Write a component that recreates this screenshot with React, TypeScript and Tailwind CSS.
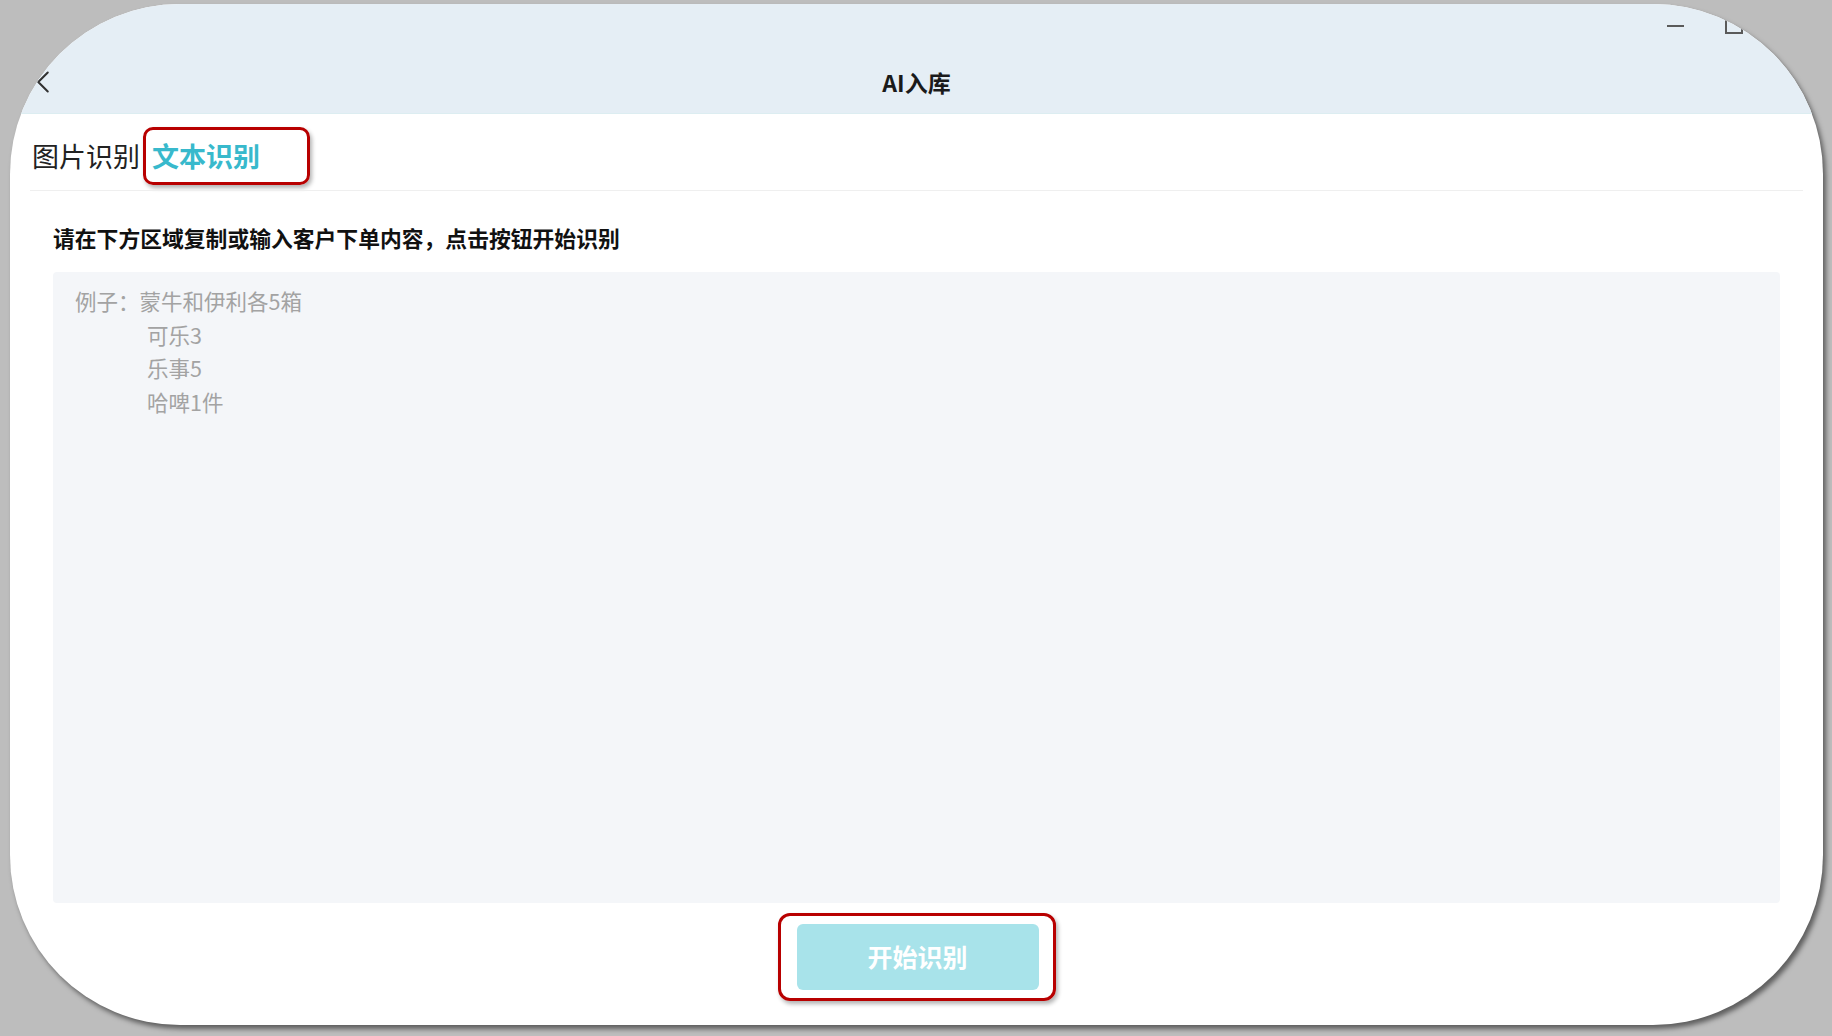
import { ChevronLeft } from "lucide-react";

const cjk = { fontFamily: '"Noto Sans CJK SC", "Noto Sans", sans-serif' };

const sampleLines = ["可乐3", "乐事5", "哈啤1件"];

export default function App() {
  return (
    <div className="w-[1832px] h-[1036px] bg-[#bdbdbd] pt-[4px] pl-[10px]" style={cjk}>
      <div className="relative w-[1813px] h-[1021px] rounded-[170px] overflow-hidden bg-white shadow-[3px_4px_5px_rgba(0,0,0,0.5)] flex flex-col">
        <header className="h-[110px] shrink-0 bg-[#e5eef5] border-b border-[#dcedf1] pt-[46px] flex items-center relative">
          <button className="ml-[14px] text-[#333]">
            <ChevronLeft size={38} strokeWidth={1.3} />
          </button>
          <h1 className="absolute left-0 right-0 text-center text-[23px] font-bold text-[#1a1a1a] leading-[30px] top-[63px]">
            AI入库
          </h1>
        </header>

        {/* window controls */}
        <div className="absolute z-10 left-[1657px] top-[21px] w-[17px] h-[2px] bg-[#5a5a5a]" />
        <div className="absolute z-10 left-[1715px] top-[13px] w-[18px] h-[17px] border-2 border-[#5a5a5a]" />

        <div className="flex items-center px-[22px] pt-[13px]">
          <span className="text-[27px] text-[#222] leading-[34px]">图片识别</span>
          <span className="ml-[3px] w-[167px] h-[58px] border-[3px] border-[#b80000] rounded-[10px] shadow-[2px_3px_4px_rgba(0,0,0,0.3)] pl-[6px] flex items-center text-[27px] font-bold text-[#38b9cc] leading-[34px]">
            文本识别
          </span>
        </div>
        <div className="mx-[20px] mt-[5px] border-b border-[#efefef]" />

        <div className="px-[43px] flex flex-col">
          <p className="mt-[32px] text-[21.8px] font-bold text-[#111] leading-[30px]">
            请在下方区域复制或输入客户下单内容，点击按钮开始识别
          </p>
          <div className="mt-[19px] h-[631px] rounded-[4px] bg-[#f4f6f9] pl-[22px] pt-[12px] text-[21.5px] leading-[33.5px] text-[#a3a3a3]">
            <div>例子：蒙牛和伊利各5箱</div>
            {sampleLines.map((line) => (
              <div key={line} className="pl-[72px]">
                {line}
              </div>
            ))}
          </div>
        </div>

        <div className="mt-[10px] flex justify-center">
          <div className="w-[278px] h-[88px] border-[3px] border-[#b80000] rounded-[12px] shadow-[2px_3px_4px_rgba(0,0,0,0.3)] pl-[16px] pr-[14px] py-[8px]">
            <button className="w-full h-full rounded-[6px] bg-[#a8e3ea] text-white text-[25px] font-bold">
              开始识别
            </button>
          </div>
        </div>
      </div>
    </div>
  );
}
